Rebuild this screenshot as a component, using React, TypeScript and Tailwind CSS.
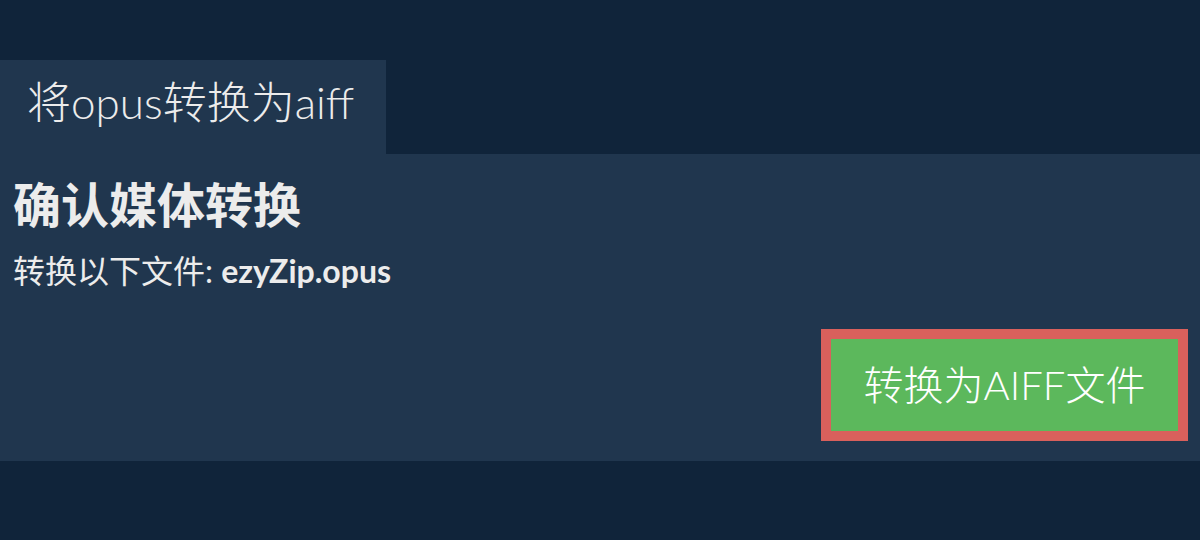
import React from 'react';

const font = { fontFamily: 'Lato, "Noto Sans CJK SC", sans-serif' };

export default function App() {
  return (
    <div className="w-[1200px] h-[540px] bg-[#10243a] pt-[60px]" style={font}>
      <div className="w-[386px] h-[94px] bg-[#20364e] flex items-center pl-[27px] pb-[10px]">
        <h1 className="text-[44px] font-light text-[#ececec] leading-none">将opus转换为aiff</h1>
      </div>
      <div className="h-[307px] bg-[#20364e] px-[13px] pt-[23px] flex flex-col">
        <h2 className="text-[48px] font-bold text-[#ececec] leading-[56px]">确认媒体转换</h2>
        <p className="mt-[18px] text-[32px] text-[#ececec] leading-[40px]">
          转换以下文件: <span className="font-bold">ezyZip.opus</span>
        </p>
        <div className="flex justify-end mt-[38px] -mr-[1px]">
          <button className="border-[10px] border-[#d9605c] bg-[#5cb85c] w-[367px] h-[112px] text-white text-[40px] font-light">
            转换为AIFF文件
          </button>
        </div>
      </div>
    </div>
  );
}
